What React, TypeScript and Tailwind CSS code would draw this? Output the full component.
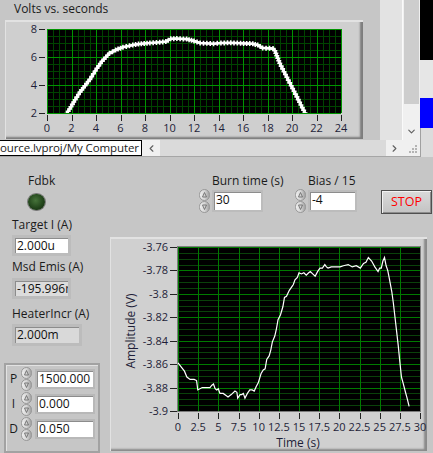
import React from "react";
import { ChevronDown, ChevronLeft, ChevronRight } from "lucide-react";

type Pt = [number, number];

// Volts vs. seconds (t, V)
const volts: Pt[] = [
  [1.5, 1.8], [1.96, 2.45], [2.3, 2.95], [2.7, 3.5], [3.1, 3.95], [3.5, 4.4], [4.08, 5.2],
  [4.5, 5.7], [5.1, 6.26], [5.6, 6.5], [6.2, 6.7], [7.0, 6.86], [7.7, 6.95], [8.4, 7.0],
  [9.2, 7.05], [9.7, 7.1], [10.1, 7.3], [10.6, 7.32], [11.4, 7.28], [12.0, 7.15], [12.5, 7.0],
  [13.6, 6.95], [14.2, 7.0], [15.0, 7.02], [15.8, 6.98], [16.8, 6.95], [17.2, 6.85],
  [17.6, 6.65], [18.45, 6.6], [18.6, 6.45], [19.0, 5.55], [19.7, 4.35], [20.4, 3.15],
  [21.06, 2.0], [21.2, 1.8],
];

// Amplitude (V) vs. Time (s)
const amps: Pt[] = [
  [0, -3.859], [0.46, -3.863], [0.8, -3.866], [1.1, -3.871], [1.5, -3.873], [2.0, -3.873],
  [2.3, -3.874], [2.45, -3.882], [3.0, -3.88], [3.6, -3.88], [3.96, -3.88], [4.2, -3.878],
  [4.4, -3.877], [4.6, -3.881], [4.8, -3.882], [5.0, -3.881], [5.2, -3.885], [5.6, -3.885],
  [6.0, -3.887], [6.2, -3.888], [6.6, -3.886], [7.06, -3.883], [7.3, -3.884], [7.4, -3.889],
  [7.7, -3.886], [7.9, -3.886], [8.1, -3.885], [8.3, -3.889], [8.6, -3.885], [8.9, -3.882],
  [9.2, -3.882], [9.45, -3.883], [9.7, -3.879], [9.95, -3.876], [10.3, -3.868], [10.57, -3.865],
  [10.8, -3.864], [11.0, -3.856], [11.3, -3.853], [11.5, -3.848], [11.7, -3.841], [12.0, -3.836],
  [12.2, -3.83], [12.4, -3.822], [12.7, -3.818], [13.0, -3.811], [13.2, -3.803], [13.45, -3.802],
  [13.8, -3.797], [14.1, -3.794], [14.3, -3.792], [14.5, -3.788], [14.8, -3.786], [15.0, -3.782],
  [15.3, -3.783], [15.6, -3.782], [15.9, -3.784], [16.2, -3.782], [16.4, -3.781], [16.7, -3.783],
  [17.0, -3.785], [17.3, -3.781], [17.6, -3.778], [17.9, -3.778], [18.2, -3.775], [18.4, -3.777],
  [18.6, -3.778], [19.0, -3.777], [19.5, -3.777], [20.1, -3.777], [20.5, -3.776], [21.1, -3.775],
  [21.6, -3.777], [22.1, -3.776], [22.6, -3.778], [23.0, -3.774], [23.3, -3.773], [23.6, -3.769],
  [24.0, -3.772], [24.4, -3.777], [24.8, -3.781], [25.0, -3.778], [25.2, -3.778], [25.4, -3.772],
  [25.6, -3.769], [25.8, -3.776], [26.0, -3.78], [26.2, -3.787], [26.5, -3.798], [26.7, -3.808],
  [26.9, -3.82], [27.1, -3.832], [27.3, -3.844], [27.5, -3.858], [27.7, -3.871], [27.9, -3.876],
  [28.2, -3.884], [28.4, -3.889], [28.65, -3.896],
];

// points every `step` px along a polyline, for the "+" point markers
function sample(pts: Pt[], step: number): Pt[] {
  const out: Pt[] = [];
  for (let i = 0; i < pts.length - 1; i++) {
    const [x1, y1] = pts[i];
    const [x2, y2] = pts[i + 1];
    const n = Math.max(1, Math.round(Math.hypot(x2 - x1, y2 - y1) / step));
    for (let k = 0; k < n; k++) out.push([x1 + ((x2 - x1) * k) / n, y1 + ((y2 - y1) * k) / n]);
  }
  out.push(pts[pts.length - 1]);
  return out;
}

const crisp = (v: number) => Math.round(v) + 0.5;

function VoltsChart() {
  const X0 = 42, Y0 = 9, W = 294, H = 84;
  const px = (t: number) => X0 + (t / 24) * W;
  const py = (v: number) => Y0 + ((8 - v) / 6) * H;
  const pts = volts.map(([t, v]) => [px(t), py(v)] as Pt);
  const marks = sample(pts, 3);

  return (
    <svg width="358" height="119" className="block">
      <defs>
        <clipPath id="voltsPlot">
          <rect x={X0} y={Y0} width={W} height={H} />
        </clipPath>
      </defs>
      <rect x={X0} y={Y0} width={W} height={H} fill="#000" />
      {/* minor grid */}
      {Array.from({ length: 49 }, (_, i) =>
        i % 4 ? <line key={"vx" + i} x1={crisp(X0 + (i * W) / 48)} x2={crisp(X0 + (i * W) / 48)} y1={Y0} y2={Y0 + H} stroke="#004400" /> : null
      )}
      {Array.from({ length: 13 }, (_, j) =>
        j % 4 ? <line key={"hy" + j} y1={crisp(Y0 + (j * H) / 12)} y2={crisp(Y0 + (j * H) / 12)} x1={X0} x2={X0 + W} stroke="#004400" /> : null
      )}
      {/* major grid */}
      {Array.from({ length: 13 }, (_, i) => (
        <line key={"VX" + i} x1={crisp(px(i * 2))} x2={crisp(px(i * 2))} y1={Y0} y2={Y0 + H} stroke="#009400" />
      ))}
      {[8, 6, 4, 2].map((v) => (
        <line key={"HY" + v} y1={crisp(py(v))} y2={crisp(py(v))} x1={X0} x2={X0 + W} stroke="#009400" />
      ))}
      {/* data */}
      <g clipPath="url(#voltsPlot)" stroke="#fff">
        <polyline points={pts.map((p) => p.join(",")).join(" ")} fill="none" strokeWidth="2.6" />
        {marks.map(([x, y], i) => (
          <path key={i} d={`M${x - 2.5} ${y}h5M${x} ${y - 2.5}v5`} strokeWidth="1.6" />
        ))}
      </g>
      {/* y axis */}
      {[8, 6, 4, 2].map((v) => (
        <g key={"ya" + v}>
          <line x1="34" x2="40" y1={crisp(py(v))} y2={crisp(py(v))} stroke="#222" />
          <text x="32" y={py(v) + 4} textAnchor="end" fontSize="11" fill="#1e1e38">{v}</text>
        </g>
      ))}
      {/* x axis */}
      {Array.from({ length: 13 }, (_, i) => (
        <g key={"xa" + i}>
          <line x1={crisp(px(i * 2))} x2={crisp(px(i * 2))} y1="95" y2="101" stroke="#222" />
          <text x={px(i * 2)} y="112" textAnchor="middle" fontSize="11" fill="#1e1e38">{i * 2}</text>
        </g>
      ))}
    </svg>
  );
}

function AmpChart() {
  const X0 = 68, Y0 = 10, W = 242, H = 164;
  const px = (t: number) => X0 + (t / 30) * W;
  const py = (v: number) => Y0 + ((-3.76 - v) / 0.14) * H;
  const pts = amps.map(([t, v]) => [px(t), py(v)] as Pt);
  const yLabels = ["-3.76", "-3.78", "-3.8", "-3.82", "-3.84", "-3.86", "-3.88", "-3.9"];
  const xLabels = ["0", "2.5", "5", "7.5", "10", "12.5", "15", "17.5", "20", "22.5", "25", "27.5", "30"];

  return (
    <svg width="317" height="214" className="block">
      <rect x={X0} y={Y0} width={W} height={H} fill="#000" />
      {Array.from({ length: 29 }, (_, j) =>
        j % 4 ? <line key={"hy" + j} y1={crisp(Y0 + (j * H) / 28)} y2={crisp(Y0 + (j * H) / 28)} x1={X0} x2={X0 + W} stroke="#0a420a" /> : null
      )}
      {Array.from({ length: 13 }, (_, i) => (
        <line key={"VX" + i} x1={crisp(X0 + (i * W) / 12)} x2={crisp(X0 + (i * W) / 12)} y1={Y0} y2={Y0 + H} stroke="#007a00" />
      ))}
      {Array.from({ length: 8 }, (_, j) => (
        <line key={"HY" + j} y1={crisp(Y0 + (j * H) / 7)} y2={crisp(Y0 + (j * H) / 7)} x1={X0} x2={X0 + W} stroke="#007a00" />
      ))}
      <rect x={X0 - 0.5} y={Y0 - 0.5} width={W + 1} height={H + 1} fill="none" stroke="#7c7c7c" />
      <polyline points={pts.map((p) => p.join(",")).join(" ")} fill="none" stroke="#fff" strokeWidth="1.2" />
      {/* y axis */}
      {yLabels.map((l, j) => (
        <g key={l}>
          <line x1="60" x2="67" y1={crisp(Y0 + (j * H) / 7)} y2={crisp(Y0 + (j * H) / 7)} stroke="#222" />
          <text x="58" y={Y0 + (j * H) / 7 + 4} textAnchor="end" fontSize="11" fill="#1e1e38">{l}</text>
        </g>
      ))}
      <text transform={`translate(25 ${Y0 + H / 2 + 2}) rotate(-90)`} textAnchor="middle" fontSize="12" fill="#1e1e38">
        Amplitude (V)
      </text>
      {/* x axis */}
      {xLabels.map((l, i) => (
        <g key={l}>
          <line x1={crisp(X0 + (i * W) / 12)} x2={crisp(X0 + (i * W) / 12)} y1="176" y2="182" stroke="#222" />
          <text x={X0 + (i * W) / 12} y="194" textAnchor="middle" fontSize="11" fill="#1e1e38">{l}</text>
        </g>
      ))}
      <text x="188" y="210" textAnchor="middle" fontSize="12" fill="#1e1e38">Time (s)</text>
    </svg>
  );
}

function Spinner() {
  return (
    <svg width="11" height="24" viewBox="0 0 11 24" className="block shrink-0">
      <defs>
        <linearGradient id="spinShade" x1="0" x2="1">
          <stop offset="0" stopColor="#f2f2f2" />
          <stop offset="0.55" stopColor="#d2d2d2" />
          <stop offset="1" stopColor="#9c9c9c" />
        </linearGradient>
      </defs>
      <rect x="0.5" y="0.5" width="10" height="11" rx="5" fill="url(#spinShade)" stroke="#979797" />
      <rect x="0.5" y="12.5" width="10" height="11" rx="5" fill="url(#spinShade)" stroke="#979797" />
      <path d="M5.5 3.5 L3.5 8 H7.5 Z" fill="none" stroke="#6e6e6e" strokeWidth="0.9" />
      <path d="M5.5 20.5 L3.5 16 H7.5 Z" fill="none" stroke="#6e6e6e" strokeWidth="0.9" />
    </svg>
  );
}

function NumBox(props: { value: string; className: string }) {
  return (
    <div className={`leading-[16px] pl-[2px] whitespace-nowrap overflow-hidden text-[#111] shadow-[inset_1px_1px_0_#8c8c8c] ${props.className}`}>
      {props.value}
    </div>
  );
}

function NumControl(props: { label: string; value: string; className: string; boxClass: string }) {
  return (
    <div className={`flex flex-col mt-[16px] ${props.className}`}>
      <span className="pl-[13px] leading-[16px] whitespace-nowrap">{props.label}</span>
      <div className="flex items-center gap-[2px]">
        <Spinner />
        <NumBox value={props.value} className={props.boxClass} />
      </div>
    </div>
  );
}

function Grip() {
  return (
    <svg width="9" height="9" viewBox="0 0 9 9" className="block">
      {[[6, 0], [3, 3], [6, 3], [0, 6], [3, 6], [6, 6]].map(([x, y]) => (
        <rect key={`${x}-${y}`} x={x} y={y} width="2" height="2" fill="#b4b4b4" />
      ))}
    </svg>
  );
}

function TopWindow() {
  return (
    <div className="h-[157px] flex shrink-0">
      <div className="w-[420px] flex flex-col">
        <div className="flex h-[140px]">
          {/* graph panel */}
          <div className="w-[380px] flex flex-col">
            <div className="h-[20px] pt-[1px] pl-[14px] leading-[16px]">Volts vs. seconds</div>
            <div className="ml-[5px] w-[358px] h-[119px] bg-[#cfcfcf] shadow-[inset_1px_2px_0_#e2e2e2,inset_-3px_-2px_2px_#7d7d7d]">
              <VoltsChart />
            </div>
          </div>
          <div className="w-[23px] bg-[#e3e3e3] border-r border-[#fafafa]" />
          {/* vertical scrollbar */}
          <div className="w-[17px] bg-[#f0f0f0] flex flex-col">
            <div className="h-[104px] bg-[#cdcdcd] mx-[1px]" />
            <div className="flex-1" />
            <div className="h-[17px] flex items-center justify-center">
              <ChevronDown size={11} strokeWidth={2.5} className="text-[#606060]" />
            </div>
          </div>
        </div>
        {/* path label + horizontal scrollbar */}
        <div className="h-[17px] flex bg-[#f0f0f0] border-b border-[#a6a6a6]">
          <div className="w-[142px] bg-white border border-l-0 border-black leading-[14px] text-[11.5px] tracking-[-0.1px] whitespace-nowrap overflow-hidden">
            ource.lvproj/My Computer
          </div>
          <div className="w-[18px] flex items-center justify-center">
            <ChevronLeft size={11} strokeWidth={2.5} className="text-[#606060]" />
          </div>
          <div className="flex-1 bg-[#dadada]" />
          <div className="w-[17px] flex items-center justify-center">
            <ChevronRight size={11} strokeWidth={2.5} className="text-[#606060]" />
          </div>
          <div className="w-[17px] flex items-end justify-end pr-[2px] pb-[2px]">
            <Grip />
          </div>
        </div>
      </div>
      {/* window behind, on the right */}
      <div className="flex-1 flex flex-col">
        <div className="h-[60px] bg-black" />
        <div className="h-[38px] bg-[#e6e6e6]" />
        <div className="h-[30px] bg-[#0000ff]" />
        <div className="flex-1 bg-[#dcdcdc] border-l border-[#a0a0a0]" />
      </div>
    </div>
  );
}

export default function App() {
  return (
    <div className="w-[433px] h-[453px] overflow-hidden bg-[#c6c6c6] font-['Open_Sans',sans-serif] text-[12px] text-[#1b1b1b] flex flex-col">
      <TopWindow />

      <div className="flex h-[296px]">
        {/* left column of controls */}
        <div className="w-[106px] shrink-0 flex flex-col">
          <span className="mt-[16px] ml-[28px] leading-[16px]">Fdbk</span>
          <div className="mt-[5px] ml-[28px] w-[17px] h-[17px] rounded-full bg-[radial-gradient(circle_at_45%_40%,#46733a,#23461c_55%,#0d1f0a)] shadow-[0_0_0_1px_#7a7a7a]" />

          <span className="mt-[7px] ml-[12px] leading-[16px]">Target I (A)</span>
          <NumBox value="2.000u" className="mt-[2px] ml-[12px] w-[59px] h-[22px] border-[3px] border-[#bcbcbc] bg-white" />

          <span className="mt-[3px] ml-[12px] leading-[16px]">Msd Emis (A)</span>
          <NumBox value="-195.996r" className="mt-[3px] ml-[12px] w-[59px] h-[22px] border-[3px] border-[#bcbcbc] bg-[#dcdcdc]" />

          <span className="mt-[7px] ml-[12px] leading-[16px]">HeaterIncr (A)</span>
          <NumBox value="2.000m" className="mt-[2px] ml-[12px] w-[70px] h-[23px] border-[3px] border-[#bcbcbc] bg-[#d9d9d9]" />

          {/* PID cluster */}
          <div className="mt-[17px] ml-[4px] w-[96px] h-[90px] shrink-0 border-2 border-[#a2a2a2] shadow-[inset_1px_1px_0_#e2e2e2] flex flex-col gap-[1px] pt-[2px]">
            {[["P", "1500.000"], ["I", "0.000"], ["D", "0.050"]].map(([k, v]) => (
              <div key={k} className="h-[24px] flex items-center">
                <span className="w-[15px] text-center leading-[16px]">{k}</span>
                <Spinner />
                <NumBox value={v} className="ml-[3px] w-[60px] h-[20px] border-2 border-[#b8b8b8] bg-white leading-[16px]" />
              </div>
            ))}
          </div>
        </div>

        {/* right side: controls row + amplitude graph */}
        <div className="flex-1 flex flex-col">
          <div className="h-[80px] shrink-0 flex items-start">
            <NumControl label="Burn time (s)" value="30" className="ml-[93px] w-[64px]" boxClass="w-[51px] h-[22px] border-[2px] border-[#bcbcbc] bg-white" />
            <NumControl label="Bias / 15" value="-4" className="ml-[32px] w-[62px]" boxClass="w-[49px] h-[22px] border-[2px] border-[#bcbcbc] bg-white" />
            <button className="ml-[24px] mt-[33px] w-[51px] h-[24px] border border-[#4f4f4f] bg-[linear-gradient(#dadada,#c3c3c3)] shadow-[inset_1px_1px_0_#f2f2f2,inset_-1px_-1px_0_#8c8c8c] text-[#ff0000] text-[12.5px] leading-[20px]">
              STOP
            </button>
          </div>
          <div className="ml-[4px] w-[317px] h-[214px] shrink-0 bg-[#d0d0d0] shadow-[inset_1px_2px_0_#e2e2e2,inset_-3px_-2px_2px_#8a8a8a]">
            <AmpChart />
          </div>
        </div>
      </div>
    </div>
  );
}
